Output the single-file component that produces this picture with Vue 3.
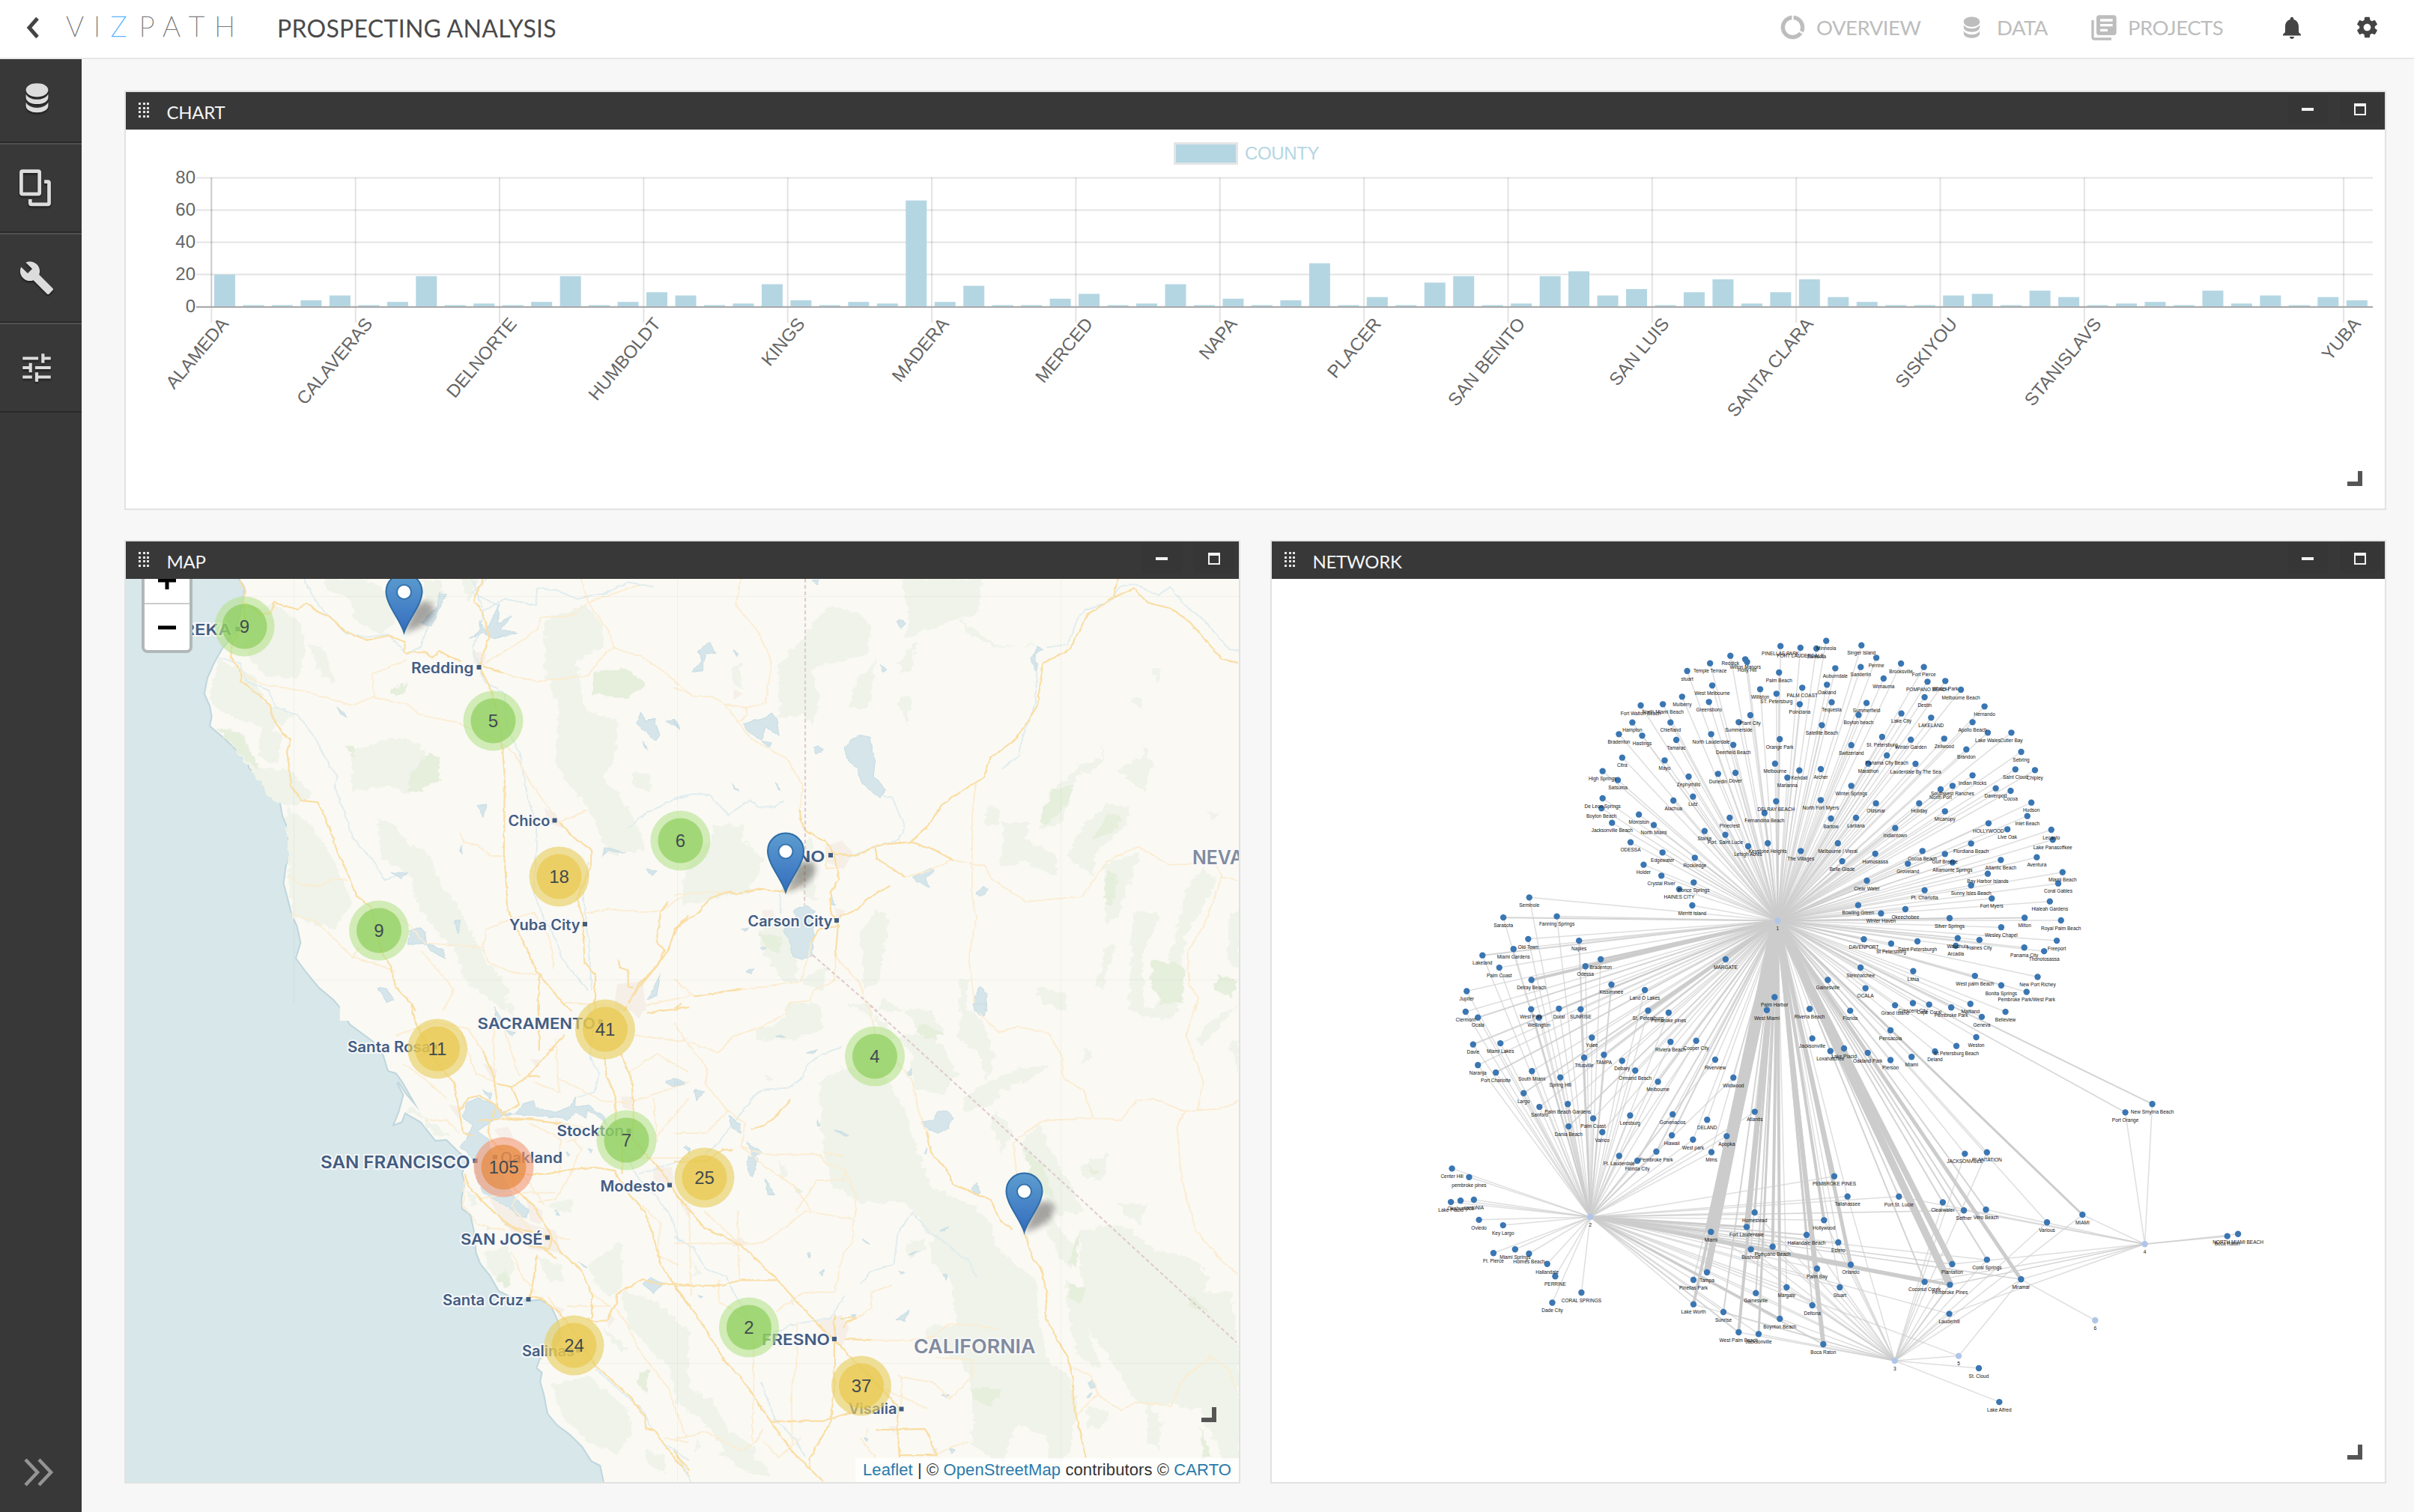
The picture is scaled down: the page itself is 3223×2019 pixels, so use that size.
<script setup>
const navItems = [
  { label: 'OVERVIEW', icon: 'usage', cls: 'nav-overview' },
  { label: 'DATA', icon: 'database', cls: 'nav-data' },
  { label: 'PROJECTS', icon: 'library', cls: 'nav-projects' },
]

const icons = {
  usage: 'M13 2.05v3.03c3.39.49 6 3.39 6 6.92 0 .9-.18 1.75-.48 2.54l2.6 1.53c.56-1.24.88-2.62.88-4.07 0-5.18-3.95-9.45-9-9.95zM12 19c-3.87 0-7-3.13-7-7 0-3.53 2.61-6.43 6-6.92V2.05c-5.06.5-9 4.76-9 9.95 0 5.52 4.47 10 9.99 10 3.31 0 6.24-1.61 8.06-4.09l-2.6-1.53C16.17 17.98 14.21 19 12 19z',
  database: 'M12 1.2c-4.6 0-8.3 1.9-8.3 5s3.700 5.300 8.300 5.300 8.300-2.200 8.300-5.300-3.700-5-8.300-5zM3.700 9.300v2.500c0 2.900 3.700 5 8.300 5s8.300-2.100 8.300-5V9.300c-1.300 2.500-4.600 4-8.300 4s-7-1.500-8.300-4zM3.700 15.500v2.600c0 2.900 3.700 4.900 8.300 4.900s8.300-2 8.300-4.900v-2.600c-1.300 2.500-4.600 4-8.300 4s-7-1.500-8.300-4z',
  library: 'M4 6H2v14c0 1.100.9 2 2 2h14v-2H4V6zm16-4H8c-1.100 0-2 .9-2 2v12c0 1.100.9 2 2 2h12c1.100 0 2-.9 2-2V4c0-1.100-.9-2-2-2zm-1 9H9V9h10v2zm-4 4H9v-2h6v2zm4-8H9V5h10v2z',
  bell: 'M12 22c1.100 0 2-.9 2-2h-4c0 1.100.89 2 2 2zm6-6v-5c0-3.070-1.640-5.640-4.500-6.320V4c0-.83-.67-1.500-1.500-1.500s-1.500.67-1.500 1.500v.68C7.630 5.360 6 7.920 6 11v5l-2 2v1h16v-1l-2-2z',
  gear: 'M19.430 12.980c.04-.32.07-.64.07-.98s-.03-.66-.07-.98l2.110-1.650c.19-.15.24-.42.12-.64l-2-3.460c-.12-.22-.39-.3-.61-.22l-2.490 1c-.52-.4-1.080-.73-1.690-.98l-.38-2.650C14.460 2.180 14.250 2 14 2h-4c-.25 0-.46.18-.49.42l-.38 2.650c-.61.25-1.170.59-1.690.98l-2.490-1c-.23-.09-.49 0-.61.22l-2 3.460c-.13.22-.07.49.12.64l2.110 1.650c-.04.32-.07.65-.07.98s.03.66.07.98l-2.110 1.650c-.19.15-.24.42-.12.64l2 3.460c.12.22.39.3.61.22l2.490-1c.52.4 1.080.73 1.690.98l.38 2.650c.03.24.24.42.49.42h4c.25 0 .46-.18.49-.42l.38-2.650c.61-.25 1.170-.59 1.690-.98l2.490 1c.23.09.49 0 .61-.22l2-3.460c.12-.22.07-.49-.12-.64l-2.110-1.650zM12 15.500c-1.930 0-3.500-1.570-3.500-3.500s1.570-3.500 3.500-3.500 3.500 1.570 3.500 3.500-1.570 3.500-3.500 3.500z',
  copy: 'M3.500 1h9.500c1 0 1.700.7 1.700 1.700v12.300c0 1-.7 1.700-1.700 1.700H3.500c-1 0-1.700-.7-1.700-1.700V2.700C1.800 1.700 2.500 1 3.500 1zm.4 2.100v11.500h8.700V3.100zM16.500 7.200h2.200c1 0 1.700.7 1.700 1.700v12.200c0 1-.7 1.700-1.700 1.700H8.800c-1 0-1.700-.7-1.700-1.700v-2.400h2.100v2h9.100V9.300h-1.800z',
  wrench: 'M22.700 19l-9.100-9.100c.9-2.300.4-5-1.500-6.900-2-2-5-2.400-7.400-1.300L9 6 6 9 1.600 4.700C.4 7.100.9 10.100 2.900 12.100c1.900 1.900 4.600 2.400 6.900 1.500l9.100 9.100c.4.4 1 .4 1.400 0l2.300-2.300c.5-.4.5-1.100.1-1.400z',
  tune: 'M3 17v2h6v-2H3zM3 5v2h10V5H3zm10 16v-2h8v-2h-8v-2h-2v6h2zM7 9v2H3v2h4v2h2V9H7zm14 4v-2H11v2h10zm-6-4h2V7h4V5h-4V3h-2v6z',
}
const sideItems = [
  { icon: 'database', size: 43 },
  { icon: 'copy', size: 54 },
  { icon: 'wrench', size: 48 },
  { icon: 'tune', size: 50 },
]

/* ---- Bar chart ---- */
const counts = [20, 1, 1, 4, 7, 1, 3, 19, 1, 2, 1, 3, 19, 1, 3, 9, 7, 1, 2, 14, 4, 1, 3, 2, 66, 3, 13, 1, 1, 5, 8, 1, 2, 14, 1, 5, 1,
  4, 27, 1, 6, 1, 15, 19, 1, 2, 19, 22, 7, 11, 1, 9, 17, 2, 9, 17, 6, 3, 1, 1, 7, 8, 1, 10, 6, 1, 2, 3, 1, 10, 2, 7, 1, 6, 4]
const X0 = 282.3
const STEP = 38.47
const Y0 = 409.6
const UNIT = 2.15
const bars = counts.map((v, i) => ({ x: X0 + i * STEP + 3.700, y: Y0 - v * UNIT, h: v * UNIT }))
const yTicks = [80, 60, 40, 20, 0].map((v) => ({ v, y: Y0 - v * UNIT }))
const xTicks = [[0, 'ALAMEDA'], [5, 'CALAVERAS'], [10, 'DELNORTE'], [15, 'HUMBOLDT'], [20, 'KINGS'], [25, 'MADERA'], [30, 'MERCED'], [35, 'NAPA'],
  [40, 'PLACER'], [45, 'SAN BENITO'], [50, 'SAN LUIS'], [55, 'SANTA CLARA'], [60, 'SISKIYOU'], [65, 'STANISLAVS'], [74, 'YUBA']]
  .map(([i, label]) => ({ label, x: X0 + i * STEP }))

/* ---- Network graph ---- */
const place = (ox, oy, sx, sy, rows) =>
  rows.map(([x, y, label, ...w]) => ({ x: ox + x * sx, y: oy + y * sy, label, w: w.length ? w : [1] }))

const hubs = [
  { x: 2373.3, y: 1229.5, label: '1' },
  { x: 2123.2, y: 1625, label: '2' },
  { x: 2529.7, y: 1817, label: '3' },
  { x: 2863.6, y: 1661.3, label: '4' },
  { x: 2615.1, y: 1810.6, label: '5' },
  { x: 2797.3, y: 1763, label: '6' },
]
const nodes = [
  ...place(2050, 820, 0.4847, 0.33333, [
    [675, 128, 'PINELLAS PARK'], [730, 135, 'FORT LAUDERDALE'], [774, 138, 'Sarasota'], [801, 107, 'Minneola'], [898, 125, 'Singer Island'],
    [537, 167, 'Reddick'], [578, 181, 'Wilton Manors'], [583, 192, 'Holly Hill'], [481, 197, 'Temple Terrace'], [418, 228, 'stuart'],
    [671, 234, 'Palm Beach'], [826, 217, 'Auburndale'], [896, 212, 'Sanderlin'], [939, 175, 'Perrine'], [1007, 198, 'Brooksville'],
    [1070, 212, 'Fort Pierce'], [1080, 271, 'POMPANO BEACH'], [1129, 268, 'Winter Park'], [1172, 303, 'Melbourne Beach'], [959, 258, 'Wimauma'],
    [487, 286, 'West Melbourne'], [619, 301, 'Williston'], [664, 319, 'ST. Petersburg'], [735, 295, 'PALM COAST'], [803, 283, 'Oakland'],
    [404, 331, 'Mulberry'], [478, 352, 'Greensboro'], [728, 361, 'Poinciana'], [816, 353, 'Tequesta'], [912, 356, 'Summerfield'],
    [1072, 333, 'Destin'], [1237, 370, 'Hernando'], [290, 366, 'Fort Walton Beach'], [351, 361, 'North Miami Beach'], [592, 405, 'Plant City'],
    [560, 433, 'Summerside'], [890, 404, 'Boyton beach'], [1008, 398, 'Lake City'], [1090, 415, 'LAKELAND'], [1204, 433, 'Apollo Beach'],
    [267, 434, 'Hampton'], [372, 434, 'Chiefland'], [789, 445, 'Satellite Beach'], [230, 481, 'Bradenton'], [294, 487, 'Hastings'],
    [388, 504, 'Tamarac'], [484, 481, 'North Lauderdale'], [673, 501, 'Orange Park'], [1246, 475, 'Lake Wales'], [1311, 475, 'Cutler Bay'],
    [545, 524, 'Deerfield Beach'], [870, 525, 'Switzerland'], [955, 492, 'St. Petersburg'], [1034, 503, 'Winter Garden'], [1126, 499, 'Zellwood'],
    [1187, 542, 'Brandon'], [1338, 552, 'Sebring'], [239, 575, 'Citra'], [356, 586, 'Mayo'], [660, 599, 'Melbourne'], [968, 566, 'Panama City Beach'],
    [917, 599, 'Marathon'], [1047, 600, 'Lauderdale By The Sea'], [185, 629, 'High Springs'], [227, 665, 'Satsuma'], [422, 651, 'Zephyrhills'],
    [503, 640, 'Dunedin'], [551, 636, 'Dover'], [694, 655, 'Marianna'], [727, 626, 'Kendall'], [786, 621, 'Archer'], [1322, 622, 'Saint Cloud'],
    [1376, 625, 'Chipley'], [1204, 646, 'Indian Rocks'], [870, 688, 'Winter Springs'], [1116, 702, 'North Port'], [1149, 688, 'Southwest Ranches'],
    [1268, 698, 'Davenport'], [1309, 708, 'Cocoa'], [185, 738, 'De Leon Springs'], [182, 778, 'Boyton Beach'], [380, 747, 'Alachua'],
    [434, 731, 'Lutz'], [663, 750, 'DELRAY BEACH'], [786, 745, 'North Fort Myers'], [938, 758, 'Oldsmar'], [1057, 758, 'Holiday'],
    [1366, 755, 'Hudson'], [285, 803, 'Morriston'], [631, 797, 'Fernandina Beach'], [1128, 790, 'Micanopy'], [1355, 809, 'Inlet Beach'],
    [211, 836, 'Jacksonville Beach'], [326, 845, 'North Miami'], [535, 816, 'Pinecrest'], [814, 819, 'Bartow'], [883, 816, 'Lantana'],
    [1248, 838, 'HOLLYWOOD'], [466, 869, 'Starke'], [523, 884, 'Port. Saint Lucie'], [991, 857, 'Indiantown'], [1300, 862, 'Live Oak'],
    [1421, 864, 'Lecanto'], [1425, 904, 'Lake Panasoffkee'], [262, 914, 'ODESSA'], [586, 930, 'Lehigh Acres'], [640, 918, 'Keystone Heights'],
    [833, 918, 'Melbourne / Vieral'], [1200, 919, 'Flordiana Beach'], [350, 955, 'Edgewater'], [731, 949, 'The Villages'], [1066, 949, 'Cocoa Beach'],
    [936, 960, 'Homosassa'], [1128, 961, 'Gulf Breeze'], [1149, 995, 'Altamonte Springs'], [439, 976, 'Rockledge'], [845, 990, 'Belle Glade'],
    [1026, 1000, 'Groveland'], [1282, 985, 'Atlantic Beach'], [1381, 974, 'Aventura'], [298, 1004, 'Holder'], [347, 1048, 'Crystal River'],
    [1246, 1040, 'Bay Harbor Islands'], [1452, 1034, 'Miami Beach'], [436, 1075, 'Ponce Springs'], [396, 1102, 'HAINES CITY'], [913, 1068, 'Clear Water'],
    [1440, 1079, 'Coral Gables'], [1200, 1087, 'Sunny Isles Beach'], [1072, 1106, 'Pt. Charlotta'], [1257, 1139, 'Fort Myers'], [1417, 1151, 'Hialeah Gardens'],
    [432, 1167, 'Merritt Island'], [889, 1166, 'Bowling Green'], [952, 1199, 'Winter Haven'], [1019, 1182, 'Okeechobee'],
  ]),
  ...place(1900, 1180, 0.35714, 0.38265, [
    [397, 48, 'Seminole', 1, 1], [300, 118, 'Sarasota', 2, 1], [500, 114, 'Fanning Springs', 1, 1], [393, 193, 'Old Town', 1, 1], [583, 199, 'Naples', 1, 2],
    [338, 228, 'Miami Gardens', 1, 1], [222, 250, 'Lakeland', 2, 1], [285, 293, 'Palm Coast', 1, 1], [664, 264, 'Bradenton', 3, 1], [607, 288, 'Odessa', 4, 1],
    [405, 336, 'Delray Beach', 4, 1], [163, 375, 'Jupiter', 1, 1], [704, 352, 'Kissimmee', 1, 2], [829, 371, 'Land O Lakes', 1, 1], [159, 447, 'Clermont', 1, 1],
    [205, 467, 'Ocala', 2, 1], [404, 438, 'West Park', 1, 2], [433, 467, 'Wellington', 2, 1], [508, 436, 'Doral', 1, 1], [589, 438, 'SUNRISE', 1, 2],
    [841, 443, 'St. Petersburg', 5, 1], [918, 450, 'Pembroke pines', 1, 1], [1131, 264, 'MARGATE', 1], [631, 537, 'Yulee', 1, 1], [187, 561, 'Davie', 2, 1],
    [289, 557, 'Miami Lakes', 1, 1], [925, 552, 'Riviera Beach', 1, 1], [1021, 548, 'Cooper City', 1, 1], [602, 607, 'Titusville', 2, 1], [676, 597, 'TAMPA', 2, 1],
    [744, 618, 'Debary', 1, 1], [793, 652, 'Ormand Beach', 1, 1], [1092, 614, 'Riverview', 1, 1], [205, 633, 'Naranja', 1, 1], [272, 659, 'Port Charlotte', 2, 1],
    [407, 654, 'South Miami', 1, 1], [513, 676, 'Spring Hill', 1, 1], [878, 691, 'Melbourne', 2, 1], [1160, 677, 'Wildwood', 1, 1], [376, 731, 'Largo', 2, 1],
    [435, 779, 'Sanford', 1, 1], [541, 769, 'Palm Beach Gardens', 1, 1], [636, 819, 'Palm Coast', 1, 1], [544, 847, 'Dania Beach', 2, 1], [670, 867, 'Valrico', 1, 1],
    [774, 809, 'Leesburg', 1, 1], [933, 805, 'Gonenacios', 1, 1], [1062, 824, 'DELAND', 1], [1240, 796, 'Atlantis', 1, 1], [930, 878, 'Hiawaii', 2, 1],
    [1009, 893, 'West park', 1, 1], [1135, 881, 'Apopka', 1, 1], [872, 935, 'Pembroke Park', 2, 1], [733, 950, 'Ft. Lauderdale', 1, 1], [801, 967, 'Florida City', 2, 1],
    [1078, 937, 'Mims', 1, 1], [1314, 396, 'Palm Harbor', 1], [1285, 441, 'West Miami', 2], [1445, 437, 'Riveria Beach', 1], [1455, 540, 'Jacksonville', 1],
    [108, 994, 'Center Hill', 0, 1], [172, 1024, 'pembroke pines', 0, 1], [104, 1111, 'Lake Placid', 0, 1], [140, 1106, 'Okahumpca', 0, 1], [190, 1103, 'cantoNIA', 0, 1],
    [209, 1173, 'Oviedo', 0, 1], [299, 1192, 'Key Largo', 0, 1], [263, 1289, 'Ft. Pierce', 0, 1], [344, 1276, 'Miami Springs', 0, 1], [396, 1291, 'Holmes Beach', 0, 1],
    [464, 1327, 'Hallandale', 0, 1], [494, 1370, 'PERRINE', 0, 1], [592, 1427, 'CORAL SPRINGS', 0, 1], [483, 1462, 'Dade City', 0, 1],
  ]),
  ...place(2400, 1180, 0.43367, 0.48469, [
    [468, 95, 'Silver Springs', 2], [699, 94, 'Milton', 2], [811, 101, 'Royal Palm Beach'], [627, 120, 'Wesley Chapel'], [798, 157, 'Freeport'],
    [204, 153, 'DAVENPORT', 2], [288, 165, 'St Petersburg'], [369, 159, 'Saint Petersburgh'], [493, 150, 'Wauchula'], [487, 171, 'Arcadia'], [560, 155, 'Haines City'],
    [698, 176, 'Panama City'], [759, 186, 'Thonotosassa'], [194, 231, 'Steinhatchee'], [356, 241, 'Lithia'], [546, 254, 'West palm Beach'], [739, 257, 'New Port Richey'],
    [627, 280, 'Bonita Springs'], [705, 298, 'Pembroke Park/West Park'], [93, 265, 'Gainesville'], [209, 288, 'OCALA'], [300, 335, 'Grand Island'],
    [355, 329, 'Crescent City'], [405, 333, 'Cape Coral'], [473, 341, 'Pembroke Park'], [532, 331, 'Maitland'], [567, 367, 'Geneva'], [640, 353, 'Belleview'],
    [162, 350, 'Florida'], [286, 404, 'Pensacola'], [550, 423, 'Weston'], [489, 447, 'St Petersburg Beach'], [423, 462, 'Deland'], [351, 477, 'Miami'],
    [286, 486, 'Pierson'], [216, 466, 'Oakland Park'], [143, 454, 'Lake Placid', 3], [101, 461, 'Loxahatchee'],
    [1009, 630, 'Port Orange', 1.600, 0, 0, 1], [1092, 607, 'New Smyrna Beach', 2, 0, 0, 1], [515, 744, 'JACKSONVILLE', 1, 0, 1], [583, 740, 'PLANTATION', 1, 0, 1],
    [312, 862, 'Port St. Lucie', 2, 1, 0, 1], [447, 878, 'Clearwater', 2, 0, 1], [512, 900, 'Seffner', 2, 1.500, 0, 1], [580, 898, 'Vero Beach', 2, 0, 0, 1],
    [768, 933, 'Various', 1, 0, 1], [877, 912, 'MIAMI', 3, 0, 1, 1], [1323, 971, 'Boca Raton', 0, 0, 0, 1.500], [1356, 965, 'NORTH MIAMI BEACH', 0, 0, 0, 1],
    [583, 1036, 'Coral Springs', 2, 1, 1], [476, 1048, 'Plantation', 8, 1.500, 1, 1], [469, 1105, 'Pembroke Pines', 10, 4, 2, 1.500], [688, 1090, 'Miramar', 5, 1.500, 1, 1, 1, 1],
    [467, 1185, 'Lauderhill', 0, 1, 1, 1], [558, 1335, 'St. Cloud', 0, 0, 1], [621, 1428, 'Lake Alfred', 0, 0, 1],
  ]),
  ...place(2180, 1520, 0.33333, 0.33333, [
    [807, 152, 'PEMBROKE PINES', 4, 1], [860, 233, 'Tallahassee', 1, 1, 1], [488, 297, 'Homestead', 3, 1, 1], [456, 355, 'Fort Lauderdale', 7, 3, 1],
    [766, 328, 'Hollywood', 4, 1, 1], [696, 387, 'Hallandale Beach', 3, 2, 1], [313, 375, 'Miami', 16, 3, 1], [473, 445, 'Bushnell', 1, 1, 1],
    [560, 434, 'Pompano Beach', 4, 2, 1], [823, 417, 'Estero', 1, 1, 1], [738, 522, 'Palm Bay', 3, 1, 1], [873, 506, 'Orlando', 5, 4, 1],
    [297, 537, 'Tampa', 9, 1, 1], [243, 567, 'Pinellas Park', 1, 1], [616, 597, 'Margate', 1, 1, 1], [829, 597, 'Stuart', 1, 1, 1],
    [493, 620, 'Gainesville', 2, 1, 1], [243, 665, 'Lake Worth', 4, 1, 1], [719, 669, 'Deltona', 2, 1, 1], [363, 696, 'Sunrise', 2, 1, 1],
    [589, 723, 'Boynton Beach', 4, 3, 1], [424, 777, 'West Palm Beach', 4, 2, 1], [504, 784, 'Jacksonville', 3, 1, 1], [763, 825, 'Boca Raton', 6, 2, 1],
    [1169, 575, 'Coconut Creek', 2, 3, 1, 1],
  ]),
]
const links = nodes.flatMap((n) => n.w.map((w, i) => ({ n, w, h: hubs[i] })).filter((l) => l.w))
links.push({ n: hubs[4], w: 1, h: hubs[2] }, { n: hubs[4], w: 1, h: hubs[1] })

/* ---- Map: coastline in two stretches, then four base tiles, each drawn in its own local grid ---- */
const coasts = [
  {
    t: 'translate(160 710) scale(.4847 .4082)',
    d: 'M328 150L345 180 343 215 335 260 320 330 283 385 262 430 243 480 235 530 250 570 255 605 250 635 290 675 320 710 350 740 358 772 385 800 405 840 425 870 443 885 450 930 465 970 467 1020 475 1050 460 1090 453 1150 462 1190 475 1250 490 1290 500 1345 487 1395 515 1440 550 1490 590 1530 606 1552',
    rest: 'L606 1600 3300 1600 3300 100Z',
  },
  {
    t: 'translate(160 1340) scale(.4847 .4209)',
    d: 'M603 3L635 65 700 120 728 165 740 212 762 220 780 248 825 340 785 285 765 250 783 290 770 345 757 382 775 375 785 345 830 375 870 433 900 430 935 470 957 490 945 540 952 570 943 620 945 650 968 670 978 725 983 790 995 825 1020 860 1045 910 1080 930 1130 940 1160 937 1190 960 1210 1010 1215 1060 1195 1100 1160 1125 1150 1155 1165 1170 1160 1200 1170 1240 1180 1300 1205 1335 1240 1365 1275 1405 1300 1450 1325 1465 1342 1560',
    rest: 'L3300 1600 3300 -20 603 -20Z',
  },
]
const tiles = [
  {
    id: 'nw', t: 'translate(160 710) scale(.4847 .4082)',
    forest: [
      'M565 154L680 154 745 200 760 300 720 335 650 290 630 210 575 195Z',
      'M345 260L430 240 500 300 510 400 495 480 400 470 350 400Z', 'M270 420L370 470 400 560 480 600 420 650 300 600 250 560Z',
      'M270 640L340 660 380 770 470 780 530 860 480 900 420 880 350 760Z', 'M390 640L450 660 430 760 380 740Z',
      'M460 900L530 960 590 1080 640 1220 590 1300 480 1260 465 1140Z', 'M640 720L750 670 820 690 850 740 800 860 730 830 640 850Z',
      'M710 940L760 960 800 1030 850 1050 880 1150 930 1220 980 1340 1010 1400 1070 1500 1060 1568 960 1480 920 1370 830 1240 800 1120 720 1070Z',
      'M1170 290L1280 240 1330 300 1330 380 1260 420 1280 580 1370 620 1360 760 1330 800 1400 900 1450 1040 1350 1060 1290 900 1240 830 1200 760 1210 580 1170 450Z',
      'M1410 790L1460 790 1460 850 1420 830Z', 'M520 370L560 380 590 490 560 480Z', 'M940 154L990 154 960 230Z', 'M830 160L880 160 900 220 840 240Z',
    ],
    park: ['M1300 460L1390 445 1450 500 1400 545 1300 530Z', 'M850 725L885 740 880 810 830 850 795 850 800 790Z', 'M262 645L335 660 388 785 365 765 305 690Z', 'M755 510L790 495 780 530 752 532Z', 'M618 695L650 705 645 740Z'],
    urban: ['M1170 905L1200 920 1220 970 1175 950Z', 'M1370 1480L1440 1470 1450 1568 1360 1568Z', 'M970 390L1010 400 1000 440 975 430Z'],
    lake: [
      'M800 1305Q820 1285 840 1310L845 1345 890 1370 897 1397 860 1375 845 1350 793 1350Z', 'M1423 630L1435 590 1450 620 1472 610 1487 665 1475 685 1450 655Z',
      'M1503 620L1530 616 1543 645Z', 'M1440 685L1455 716 1445 705Z', 'M965 350L995 320 990 290 1010 325 1045 235 1040 300 1080 275 1050 320 1095 330 1030 350 1000 330Z',
      'M880 200L900 205 875 260 860 310 830 300 875 240Z', 'M985 895L1010 892 1000 935Z', 'M1330 1060L1335 1030 1390 1050 1345 1045Z', 'M1450 1105L1480 1110 1465 1125Z',
      'M1455 1530L1475 1480 1490 1445 1478 1520Z', 'M920 1275L938 1270 932 1315Z', 'M598 573L628 606 610 600Z', 'M940 1025L943 1055 936 1045Z', 'M710 1490L735 1495 755 1530 735 1540Z', 'M745 1115L790 1115 775 1135Z',
    ],
    river: [
      'M508 154C540 240 560 260 590 290L620 330 680 345 740 335 790 400 830 375 850 300', 'M270 410L330 430 350 490 410 520 430 575 490 600 540 680 575 760 600 800 590 830 620 920 640 1000 700 1080 730 1140 780 1120',
      'M970 154L985 200 1000 260 990 330 970 380 1005 490 1060 530 1065 640 1100 720 1125 880 1150 960 1140 1180 1170 1270 1200 1330 1220 1400 1290 1500',
      'M1568 865C1520 870 1500 895 1450 920L1400 970', 'M1000 260L1060 220 1145 240 1150 185 1200 190 1260 220 1340 200 1400 165 1468 180', 'M1290 1080L1275 1180 1290 1320 1300 1500', 'M1010 154L970 200 1040 240',
    ],
    road: [
      'M330 160L345 190 340 230 390 270 415 268 425 232 490 255 515 232 545 262 580 280 620 325 680 355 740 340 785 360 785 395 840 395 860 412 880 392 940 425',
      'M340 230L345 300 310 360 305 410 330 450 335 490 380 530 415 570 420 610 450 660 470 680 460 720 468 780 470 830 500 880 545 885 575 960 600 1050 625 1110 650 1190 690 1225 720 1370 745 1420 760 1490 800 1540 815 1568',
      'M1000 154L975 220 1000 270 1018 340 990 440 1020 510 1050 650 1060 800 1058 1050 1070 1240 1150 1440 1225 1550 1245 1568', 'M1210 950L1250 1000 1298 1040 1298 1090 1260 1200 1275 1260 1280 1410 1308 1450 1308 1568',
      'M1000 440L1060 465', 'M1510 1210L1490 1245 1478 1340 1500 1370 1480 1420 1430 1480 1390 1568', 'M1568 1255L1530 1300 1510 1370 1480 1420 1410 1520', 'M1155 1450L1152 1568', 'M1372 1400L1378 1425 1400 1435 1400 1490 1415 1495',
    ],
    minor: [
      'M790 420L695 465 700 540 640 568 600 555 520 525 500 520 395 500 335 465', 'M700 540L790 565 830 600 930 625 1050 690', 'M1060 465L1150 490 1290 470 1330 405 1360 380 1350 330 1290 230 1270 154',
      'M1360 380L1440 410 1500 460 1568 530', 'M990 440L1090 370 1150 320 1160 280 1250 275 1290 230 1430 175', 'M1050 690L1090 730 1130 820 1210 950', 'M940 985L945 1015 985 1025 1020 1060 1058 1062',
      'M470 1250L540 1275 590 1330 640 1390 720 1420 760 1440', 'M462 1125L500 1155 550 1160 590 1135 625 1140', 'M720 1225L800 1290 840 1345 1000 1360 1010 1300 1070 1270 1140 1245 1185 1330 1195 1430',
      'M640 1390L700 1310 730 1340', 'M1000 1360L1015 1410 1080 1440 1155 1450', 'M1210 950L1290 910', 'M1275 1250L1340 1235 1450 1245 1490 1240 1568 1180', 'M830 1370L880 1440 920 1500 890 1568', 'M1225 1540L1420 1555 1568 1520',
    ],
    dash: [],
  },
  {
    id: 'ne', t: 'translate(900 710) scale(.4974 .4082)',
    forest: [
      'M608 154L825 154 815 270 770 280 620 350 630 270Z', 'M380 290L420 245 500 265 530 310 520 400 460 420 370 450 390 560 370 630 350 600 285 605 280 440 330 370Z',
      'M545 410L520 580 468 570 490 490Z', 'M650 360L600 430 610 460 635 455Z', 'M600 540L638 540 625 635Z', 'M1090 765L1150 740 1155 680 1140 770 1080 800 1040 960 980 970 1010 850 1060 800Z',
      'M1190 780L1250 745 1265 700 1285 760 1265 855Z', 'M1160 890L1220 900 1215 960 1130 1050 1130 1125 1060 1070 1080 990Z', 'M880 950L958 950 940 1000 1025 1060 1025 1128 940 1080 880 1100Z',
      'M840 900L875 900 872 960 838 960Z', 'M545 1235L575 1270 550 1470 510 1500 500 1310Z', 'M1240 1240L1305 1250 1260 1380 1260 1568 1220 1568 1230 1320Z', 'M1420 1100L1460 1140 1370 1330 1350 1568 1290 1568 1350 1300 1370 1180Z',
      'M1490 1250L1516 1240 1516 1440 1485 1400Z', 'M110 960L190 960 200 920 180 1000 240 1070 200 1180 20 1220 30 1100 90 1020Z', 'M240 1240L320 1300 330 1480 280 1460 230 1350Z', 'M340 1460L410 1420 400 1500 350 1480Z',
      'M1150 1500L1185 1350 1160 1360 1130 1480Z', 'M970 1490L1060 1510 1050 1568 985 1540Z', 'M1280 450L1302 450 1295 495Z', 'M1225 560L1245 540 1258 580Z', 'M1155 1090L1250 1050 1190 1260 1160 1280Z', 'M1430 920L1460 920 1450 945Z', 'M155 450L175 430 185 510 165 510Z',
      'M560 1530L620 1568 540 1568Z', 'M770 1460L790 1470 785 1568 765 1540Z', 'M320 1030L370 1000 380 1210 340 1180Z', 'M760 275L800 340 870 380 960 368 980 375 870 372 820 335Z',
    ],
    park: ['M1020 840L1070 830 1060 880 1000 960 980 950Z', 'M1160 930L1200 920 1190 970 1120 1010Z', 'M1280 1400L1370 1420 1370 1540 1310 1550 1280 1480Z', 'M1160 1110L1190 1120 1180 1220 1155 1220Z', 'M1460 1450L1510 1470 1500 1520 1450 1500Z', 'M230 1310L290 1330 280 1380 240 1350Z'],
    urban: ['M405 1030L450 1010 480 1050 455 1105 410 1080Z', 'M160 515L185 530 160 550Z', 'M235 1240L265 1235 270 1265 240 1260Z', 'M430 1230L460 1240 440 1280Z'],
    lake: [
      'M457 708L475 680 500 665 525 672 532 720 540 750 535 800 568 845 553 873 505 825 490 775 465 745Z', 'M186 628L235 612 262 594 277 615 281 667 245 640 235 682 200 655Z',
      'M320 1240L355 1222 378 1240 370 1255 375 1320 370 1385 345 1400 320 1390 308 1330 293 1310 300 1290 330 1270Z', 'M375 705L390 700 400 715 380 728Z', 'M65 390L95 360 110 395 85 400 75 455 48 460 75 420Z',
      'M158 385L175 400 168 408Z', 'M598 295L610 288 622 300 610 316Z', 'M370 160L388 155 385 175Z', 'M958 415L975 375 992 385 970 400 973 455 960 430Z', 'M640 1130L690 1100 700 1110 675 1135 685 1165 650 1140Z',
      'M810 1185L830 1160 843 1170 825 1195Z', 'M805 1530L820 1488 840 1510 838 1568 806 1568Z', 'M420 1190L435 1225 420 1220Z', 'M155 825L175 850 160 840Z', 'M272 820L286 845 278 840Z', 'M553 435L570 450 560 460Z', 'M192 1440L215 1430 208 1445Z', 'M230 1360L247 1360 238 1370Z', 'M180 1300L200 1297 190 1305Z', 'M235 685L262 690 255 708Z', 'M0 620L15 640 5 635Z',
    ],
    river: ['M0 870L50 858 95 860 145 925 205 878 225 900 270 900 295 880', 'M560 865L585 868 620 970 600 1010 530 1035 470 1065', 'M1000 378L1055 370 1085 280 1105 255 1175 225 1195 180 1235 170 1300 210 1330 180 1380 250 1420 285 1490 385 1516 390', 'M975 430L970 560 930 690 925 735 880 775', 'M320 1140L285 1180 285 1250'],
    road: [
      'M1190 154L1180 215 1110 270 1062 385 990 430 975 570 920 675 850 740 830 805 720 890 680 965 635 1015 545 1025 490 1060 430 1055 408 1012 360 985 340 950 338 910', 'M1180 215L1235 185 1270 232 1330 250 1380 290 1470 415 1516 430',
      'M635 1015L690 1035 750 1075', 'M0 1320L10 1290 65 1245 95 1200 145 1178 170 1185 230 1170 300 1178', 'M430 1060L443 1140 420 1180 420 1240 440 1290 433 1390', 'M443 1260L495 1235 520 1200 580 1158', 'M540 1035L545 1070 620 1130', 'M55 1520L180 1495', 'M440 1290L390 1300 370 1340',
    ],
    minor: [
      'M180 154L165 240 225 325 262 430 245 560 195 575 135 565 105 540 60 540 0 510', 'M135 565L210 680 300 740 345 830 338 910', 'M195 575L195 600 175 620', 'M810 820L800 930 800 1200 812 1270 790 1390 810 1568', 'M750 1075L835 1092 850 1135 945 1210 1095 1193 1160 1080 1245 1030 1330 1090 1450 1080 1470 1130 1516 1140',
      'M1470 1130L1425 1280 1378 1380 1382 1480 1408 1525 1400 1568', 'M0 1465L55 1520 340 1470 360 1390 370 1340', 'M433 1390L430 1470 375 1500 365 1535 310 1540 300 1568', 'M433 1390L500 1480 520 1568', 'M0 1190L80 1180 145 1178', 'M620 1130L680 1110 745 1072', 'M405 1050H445V1100H408V1040', 'M355 1090L340 1150 300 1178',
    ],
    dash: ['M352 154V960L350 1222M372 1385L545 1568'],
  },
  {
    id: 'sw', t: 'translate(160 1340) scale(.4847 .4209)',
    forest: [
      'M1000 790L1070 770 1090 840 1060 900 1020 850Z', 'M1150 800L1210 830 1225 880 1180 880Z', 'M1290 830L1380 760 1385 900 1350 930 1310 890Z', 'M1380 910L1470 940 1568 1040 1568 1200 1480 1120 1400 1020Z',
      'M1190 1210L1290 1180 1400 1290 1410 1360 1370 1430 1290 1390 1220 1310Z', 'M1450 1420L1500 1430 1500 1490 1450 1460Z', 'M790 345L830 360 870 420 910 420 860 380 800 325Z', 'M1180 640L1250 620 1240 670Z', 'M955 595L980 610 985 640 965 640Z', 'M1330 1030L1400 1090 1380 1110Z', 'M1040 0L1080 0 1090 40Z',
      'M1510 1150L1568 1180 1568 1300Z',
    ],
    park: ['M1035 870L1065 845 1082 890 1060 900Z', 'M1430 1170L1460 1165 1450 1230 1425 1220Z', 'M1010 700L1025 715 1012 720Z'],
    urban: ['M1010 600L1060 640 1130 700 1200 720 1215 790 1130 780 1050 690Z', 'M1120 620L1165 660 1160 700 1130 690Z', 'M1030 400L1070 390 1090 440 1050 430Z', 'M1380 295L1410 295 1415 340 1385 330Z', 'M1470 520L1520 520 1530 590 1470 560Z', 'M1390 0L1450 0 1430 50Z', 'M1345 980L1365 1000 1345 1030Z', 'M1000 190L1040 210 1030 250Z', 'M830 140L870 145 890 180 830 170Z', 'M1200 960L1225 970 1210 1000Z', 'M1130 175L1160 180 1150 205Z', 'M905 320L940 330 935 370Z', 'M1550 630L1568 640 1568 680Z'],
    lake: [
      'M955 315L985 300 1030 320 1055 345 1090 352 1110 318 1140 308 1145 330 1200 345 1240 328 1255 297 1253 330 1290 322 1335 360 1340 385 1305 345 1285 340 1285 365 1255 345 1230 372 1215 362 1100 352 1060 352 1010 385 985 405 1015 430 1025 480 1060 560 1090 620 1125 655 1120 680 1098 675 1080 655 1060 640 1000 600 985 560 975 500 955 470 935 455 955 430 970 385 945 360Z',
      'M1440 890L1460 868 1495 890 1470 918Z', 'M1505 250L1530 235 1558 255 1520 262Z', 'M1030 10L1050 50 1040 60Z', 'M1265 820L1290 840 1278 835Z', 'M1200 655L1212 672 1203 672Z', 'M1000 275L1025 285 1020 305Z', 'M1290 460L1302 465 1295 475Z', 'M1230 470L1240 480 1232 485Z', 'M1060 85L1090 92 1080 102Z', 'M1555 455L1568 460 1568 475Z',
    ],
    river: ['M1290 0L1305 70 1295 170 1320 220 1310 280 1255 297', 'M1340 380L1400 490 1430 560 1470 600 1520 680 1540 755 1568 765', 'M1310 1160L1380 1230 1440 1290 1465 1350', 'M1505 1400L1568 1450', 'M1430 540L1568 490'],
    road: [
      'M805 0L810 50 880 200 920 250 935 340 945 410 975 420', 'M935 340L960 300 990 292 1040 325 1050 350 1090 370 1140 365', 'M1000 150L1030 230 1040 320 1015 390 1020 430 1060 480 1090 590 1140 640 1190 740 1215 790 1270 845 1300 920 1300 1000', 'M1225 100L1120 235 1080 265 1100 320 1050 350',
      'M1040 255L1080 265M1120 230H1155', 'M1335 170L1340 230 1365 290 1365 400 1385 440 1383 540', 'M1380 160L1410 240 1415 350 1412 430 1490 530 1530 600 1568 670', 'M1080 545L1180 540 1250 525 1310 520 1360 530 1400 600 1445 660 1470 740 1490 830 1568 960',
      'M950 540L960 580 1010 640 1080 710 1130 740 1200 810', 'M1150 800L1140 870 1130 930 1160 937 1200 970 1225 1000 1260 1060 1310 1150 1400 1240 1445 1310 1450 1350 1475 1355 1500 1400 1568 1500', 'M1285 1000L1310 1010 1340 1008 1368 950 1370 920 1440 875 1485 890 1568 892', 'M1155 0L1155 150', 'M1450 30L1568 12', 'M985 370L1100 365 1240 385', 'M1060 700L1190 745 1180 780 1110 760',
    ],
    minor: [
      'M880 60L940 90 980 220 1050 260', 'M760 100L870 60 960 80 1000 150', 'M780 190L830 230 900 300', 'M1200 110L1210 280 1140 250', 'M1210 240L1330 310 1410 315', 'M1400 220L1480 160 1568 220', 'M1415 310L1568 250', 'M1420 100L1540 120 1568 110', 'M1470 300L1480 440', 'M1568 300L1480 420', 'M1200 370L1270 460 1240 540', 'M1250 525L1200 620 1150 630',
      'M1100 600L1080 640 1130 720 1240 750', 'M950 550L945 640 985 700 1060 720', 'M990 620L1080 600 1200 600', 'M1230 440L1290 410 1370 425', 'M1400 490H1568', 'M1440 640L1490 700 1480 800 1540 830', 'M1080 790L1110 870 1150 920', 'M1360 960L1400 1020 1430 1100 1510 1220 1560 1380', 'M1300 920L1350 960 1230 960', 'M1180 930L1220 1000 1215 1080 1160 1130', 'M1020 430L1070 500 1120 560 1170 640', 'M840 370L900 370 935 410', 'M1030 60L1030 230M1060 90L1100 230M1155 70L1330 60', 'M1240 385L1320 400 1360 390', 'M1210 545L1215 430 1130 380', 'M1500 1380L1568 1390',
    ],
    dash: [],
  },
  {
    id: 'se', t: 'translate(900 1340) scale(.4974 .433)',
    forest: [
      'M390 240L450 200 560 210 620 330 640 400 660 470 690 570 800 620 850 680 860 740 900 790 970 850 980 1000 1000 1100 1060 1150 1080 1250 1060 1400 1010 1410 1000 1330 920 1300 880 1420 800 1360 800 1200 770 1100 680 1060 680 1000 760 990 740 850 690 800 690 720 620 610 500 615 420 560 400 430Z',
      'M300 0L390 0 400 80 330 110 220 110 220 80 290 60Z', 'M460 0L520 0 560 110 680 90 720 130 760 220 720 280 640 260 640 160 560 50Z', 'M620 20L690 20 720 80 700 120 640 60Z', 'M770 0L830 60 860 160 840 240 820 160 760 100Z', 'M830 250L920 200 1010 190 960 230 880 270 850 320 780 330 780 290Z',
      'M930 430L980 370 1010 450 1060 550 1100 640 1030 650 990 590 960 520Z', 'M1090 700L1200 680 1290 760 1400 790 1440 850 1420 890 1495 890 1516 1080 1516 1400 1480 1420 1410 1250 1240 1230 1190 1130 1110 1000 1090 820Z',
      'M1050 850L1080 870 1110 900 1110 1000 1150 1130 1080 1080 1060 980Z', 'M1190 615L1270 620 1255 680 1220 660Z', 'M1090 500L1170 460 1150 540 1110 540Z', 'M1100 135L1125 155 1095 190Z', 'M1400 110L1440 60 1516 0 1470 60 1420 130Z', 'M1240 20L1360 0 1330 50 1260 40Z', 'M1490 130L1516 110 1516 210Z',
      'M0 1160L100 1220 150 1320 220 1370 210 1440 150 1400 80 1290 0 1220Z', 'M120 1380L240 1420 260 1460 180 1440Z', 'M1110 1240L1170 1260 1150 1310 1110 1310Z', 'M1270 1230L1310 1290 1300 1380 1270 1350Z', 'M860 330L910 400 880 460 850 370Z', 'M620 740L670 725 680 750 630 790Z', 'M240 220L270 235 250 240Z', 'M280 480L300 520 290 540Z', 'M1000 640L1040 700 1080 760 1060 820 1000 710Z',
      'M60 1350L75 1365 55 1380Z', 'M50 790L70 830 55 840Z',
    ],
    park: ['M660 60L720 90 700 110 650 90Z', 'M940 440L990 500 1020 600 980 570 950 500Z', 'M800 1190L880 1190 850 1240 800 1220Z', 'M1090 700L1080 820 1060 800Z', 'M1390 900L1440 960 1380 930Z', 'M1060 860L1100 880 1090 930 1060 910Z', 'M1410 1300L1440 1400 1420 1400Z', 'M1110 500L1140 520 1120 540Z', 'M320 560L350 580 330 590Z'],
    urban: ['M380 980L450 960 470 1000 450 1060 410 1030Z', 'M150 730L180 720 195 745 160 750Z', 'M310 915L325 905 320 935Z', 'M20 620L45 625 35 655Z', 'M575 1305L600 1305 590 1325Z', 'M690 1370L710 1370 700 1400Z'],
    lake: [
      'M665 365L695 360 708 332 735 332 750 352 735 385 708 400 680 385Z', 'M803 0L838 0 833 38 818 35Z', 'M145 345L175 370 180 400 155 385Z', 'M200 470L225 480 210 535 195 510Z', 'M195 425L235 460 215 475Z', 'M55 265L82 270 60 300Z', 'M0 240L28 248 5 255Z', 'M245 540L270 590 250 590Z', 'M430 390L470 405 455 408Z', 'M385 360L390 380 383 378Z',
      'M800 575L812 550 822 585 806 590Z', 'M1110 1170L1122 1162 1132 1185 1118 1185Z', 'M1105 1215L1122 1200 1115 1215Z', 'M595 975L630 945 620 980Z', 'M475 960L490 960 482 970Z', 'M355 155L385 142 370 155Z', 'M275 100L298 103 285 105Z', 'M625 220L637 200 637 222Z', 'M720 1205L742 1210 730 1215Z', 'M738 1370L755 1378 745 1388Z', 'M505 725L525 742 515 738Z', 'M605 825L620 832 610 838Z', 'M390 830L403 820 398 840Z', 'M357 770L366 772 362 785Z', 'M630 775L658 765 640 775Z', 'M715 700L738 688 725 700Z', 'M30 440L45 448 35 452Z', 'M510 1340L520 1342 516 1350Z', 'M65 900L78 905 70 908Z', 'M722 835L732 838 728 855Z', 'M673 460L679 445 676 465Z',
    ],
    river: ['M165 360L215 285 240 265 310 260 345 230 355 190 400 155 450 135', 'M500 865L530 825 590 805 600 710 640 645 680 700 730 740 770 780 790 790 812 845', 'M0 720L50 750 85 820 140 840 160 890 190 950 205 1010', 'M260 1020L320 990 420 970 460 900', 'M235 1170L270 1280 330 1350 350 1400', 'M0 1370L45 1475', 'M165 360L120 430 60 490'],
    road: [
      'M678 395L690 460 730 510 750 560 850 605 875 670 910 695', 'M940 705L960 780 985 820 1000 890 997 970 1055 1090 1070 1150 1075 1250 1095 1350 1105 1400', 'M0 580L50 650 80 690 180 745 275 850 370 970 440 1050 500 1120 600 1240', 'M0 870L130 870 175 853 275 853', 'M0 870L60 960 135 1100 180 1155 260 1290 320 1385 400 1475',
      'M260 1288L400 1288 530 1240', 'M430 960L430 1190 420 1290 365 1400 365 1430', 'M445 970L490 970 460 985 455 1000', 'M460 1035L530 1038', 'M600 1240V1310M540 1315L675 1312 705 1393 605 1393M600 1315L605 1400', 'M205 388L245 375 270 350 315 297', 'M0 490L85 485 130 450 158 452', 'M0 1380L40 1440', 'M0 15L20 0',
    ],
    minor: [
      'M520 0L545 110', 'M600 180L640 240 655 330 678 395', 'M0 60L40 130 90 200 85 250 145 330 190 370 180 440 240 465 390 465 410 495 460 515 455 545 385 545 325 645', 'M40 120L120 150 160 100 240 70 300 30 310 0', 'M0 400H85L145 330', 'M0 740H235L300 690 350 640 480 665 480 735 455 770 430 890', 'M460 515L490 600 485 660',
      'M170 640L175 850', 'M180 440L240 500 320 560 370 640', 'M120 850L120 920 215 980 210 1350', 'M330 985V1110L315 1180 317 1380', 'M430 890H350L275 950M275 853V853', 'M240 1310L220 1350 180 1380 85 1320 0 1345', 'M240 1350L280 1400 340 1340', 'M530 1038L620 1040 700 1025 735 990 800 990 870 1005', 'M600 1150L700 1170 740 1220 800 1150 800 1100 700 1090',
      'M610 1150V1240M530 1170L680 1250M500 1340L540 1400M515 1335L520 1310', 'M820 30L870 88 920 72 1005 90 1040 160 1045 230 1100 270 1125 352 1200 360 1240 300 1285 293 1370 332 1465 325 1516 300', 'M1400 0L1375 100 1420 240 1405 330', 'M1370 332L1350 380 1362 540 1400 700 1475 800 1516 835', 'M1125 352L985 362 910 430 920 520 940 700', 'M1065 1120L1120 1150 1140 1210 1200 1255 1240 1230 1335 1240 1370 1150 1440 1090 1490 1130 1510 1195', 'M1140 1200L1080 1270',
      'M490 970L530 940 530 890 585 868', 'M700 1393L740 1370 790 1350', 'M80 640L180 745', 'M40 640L45 900', 'M450 470L400 460',
    ],
    dash: ['M525 5L900 400 1200 718 1510 1045'],
  },
]
const cities = [
  ['EUREKA', 212, 309, 847.5, 20.5, 317.5, 840], ['Redding', 549, 632.5, 898.500, 19.500, 639.500, 891], ['Chico', 678.500, 734.500, 1102.500, 19.500, 740.500, 1095.500],
  ['Yuba City', 680, 774.500, 1241.500, 19.500, 781, 1234], ['RENO', 1032, 1101.500, 1151, 20.500, 1109, 1142], ['Carson City', 998.500, 1111.500, 1236.500, 19.500, 1117, 1229],
  ['SACRAMENTO', 637.500, 795, 1373.500, 20.500, 802, 1364], ['Santa Rosa', 464, 574.500, 1405, 19.500, 581, 1398], ['SAN FRANCISCO', 428, 627.500, 1559.500, 22.500, 634.500, 1550],
  ['Oakland', 668, 751, 1552.500, 19.500, 661, 1545], ['Stockton', 743.500, 833, 1517, 19.500, 839.500, 1510], ['Modesto', 801.500, 888, 1591, 19.500, 894, 1582.500],
  ['SAN JOSÉ', 615, 724.500, 1662, 20.500, 731, 1652.500], ['Santa Cruz', 591, 699, 1743, 19.500, 705.500, 1735], ['Salinas', 697, 767, 1810.500, 19.500, 772, 1803],
  ['FRESNO', 1017, 1108, 1796, 20.500, 1114, 1788], ['Visalia', 1133, 1197.500, 1888, 19.500, 1203.500, 1881.500],
].map(([name, x1, x2, y, size, dx, dy]) => ({ name, x: x1, w: x2 - x1, y, size, dx, dy }))
const clusters = [
  [9, 326.5, 836.5], [5, 658.5, 962.5], [6, 908.5, 1122.5], [18, 746.5, 1170.5], [9, 506, 1242.5], [11, 584, 1400.5], [41, 808, 1374.5],
  [105, 672.5, 1558.5], [7, 836.5, 1522.5], [24, 766.5, 1796.5], [4, 1168, 1410.5], [25, 940.5, 1572.5], [2, 1000, 1772.5], [37, 1150, 1850.5],
].map(([n, x, y]) => ({ n, x, y, kind: n < 10 ? 'small' : n < 100 ? 'medium' : 'large' }))
const pins = [[539.5, 845.5], [1049, 1192], [1367.5, 1646]]
</script>

<template>
  <div class="app">
    <header class="topbar">
      <svg class="back" viewBox="0 0 20 32"><path d="M16 3.500L5 16L16 28.500" /></svg>
      <svg class="logo" viewBox="0 0 230 40">
        <text y="32" text-anchor="middle"><tspan x="17">V</tspan><tspan x="46.500">I</tspan><tspan x="75.500" class="z">Z</tspan><tspan x="113">P</tspan><tspan x="146">A</tspan><tspan x="179.500">T</tspan><tspan x="217">H</tspan></text>
      </svg>
      <h1>PROSPECTING ANALYSIS</h1>
      <nav class="nav">
        <a v-for="n in navItems" :key="n.label" :class="n.cls">
          <svg viewBox="0 0 24 24"><path :d="icons[n.icon]" /></svg><span>{{ n.label }}</span>
        </a>
        <svg class="bell" viewBox="0 0 24 24"><path :d="icons.bell" /></svg>
        <svg class="gear" viewBox="0 0 24 24"><path :d="icons.gear" /></svg>
      </nav>
    </header>

    <div class="main">
      <aside class="sidebar">
        <div v-for="s in sideItems" :key="s.icon" class="side-item">
          <svg viewBox="0 0 24 24" :width="s.size" :height="s.size"><path :d="icons[s.icon]" /></svg>
        </div>
        <svg class="expand" viewBox="0 0 42 40"><path d="M3 3L19 20L3 37M21 3L37 20L21 37" /></svg>
      </aside>

      <section class="board">
        <article class="panel wide">
          <div class="panel-head">
            <span class="grip"><i v-for="i in 12" :key="i" /></span><h2>CHART</h2>
            <span class="tool"><i class="min" /></span><span class="tool"><i class="max" /></span>
          </div>
          <div class="panel-body">
            <svg class="chart" viewBox="168 173 3016 506">
              <rect x="1568.500" y="191.500" width="83" height="27" class="legend-box" />
              <text x="1662" y="212.700" class="legend" textLength="99.500">COUNTY</text>
              <g class="grid">
                <line v-for="t in yTicks" :key="t.v" x1="262" x2="3168" :y1="t.y" :y2="t.y" />
                <line v-for="t in xTicks" :key="t.label" :x1="t.x" :x2="t.x" y1="237" y2="431" />
                <line :x1="X0" :x2="X0" y1="237" y2="410" />
              </g>
              <rect v-for="(b, i) in bars" :key="i" :x="b.x" :y="b.y" width="28" :height="b.h" class="bar" />
              <line x1="262" x2="3168" y1="410" y2="410" class="zero" />
              <text v-for="t in yTicks" :key="t.v" x="261" :y="t.y + 7.500" class="tick" text-anchor="end">{{ t.v }}</text>
              <text v-for="t in xTicks" :key="t.label" class="tick" text-anchor="end" :transform="`translate(${t.x + 24} ${433}) rotate(-50)`">{{ t.label }}</text>
            </svg>
            <i class="resize" />
          </div>
        </article>

        <article class="panel">
          <div class="panel-head">
            <span class="grip"><i v-for="i in 12" :key="i" /></span><h2>MAP</h2>
            <span class="tool"><i class="min" /></span><span class="tool"><i class="max" /></span>
          </div>
          <div class="panel-body">
            <svg class="map" viewBox="168 773 1486 1206">
              <defs>
                <filter id="rough" x="-5%" y="-5%" width="110%" height="110%">
                  <feTurbulence type="fractalNoise" baseFrequency=".045" numOctaves="3" seed="4" result="n" />
                  <feDisplacementMap in="SourceGraphic" in2="n" scale="26" xChannelSelector="R" yChannelSelector="G" />
                </filter>
                <filter id="wobble" x="-5%" y="-5%" width="110%" height="110%">
                  <feTurbulence type="fractalNoise" baseFrequency=".05" numOctaves="2" seed="9" result="n" />
                  <feDisplacementMap in="SourceGraphic" in2="n" scale="9" xChannelSelector="R" yChannelSelector="G" />
                </filter>
                <filter id="soft" x="-50%" y="-50%" width="200%" height="200%"><feGaussianBlur stdDeviation="4.500" /></filter>
                <linearGradient id="pin" x1="0" y1="0" x2="0" y2="1"><stop offset="0" stop-color="#5d9dcf" /><stop offset="1" stop-color="#346dbf" /></linearGradient>
              </defs>
              <rect x="168" y="773" width="1486" height="1206" fill="#d7e7ea" />
              <path v-for="c in coasts" :key="c.t" :transform="c.t" :d="c.d" class="coast" />
              <path v-for="c in coasts" :key="c.t" :transform="c.t" :d="c.d + c.rest" class="land" />
              <g v-for="t in tiles" :key="t.id" :transform="t.t">
                <g filter="url(#rough)">
                  <path v-for="(d, i) in t.forest" :key="i" :d="d" class="forest" />
                  <path v-for="(d, i) in t.park" :key="i" :d="d" class="park" />
                </g>
                <path v-for="(d, i) in t.urban" :key="i" :d="d" class="urban" />
                <g filter="url(#wobble)">
                  <path v-for="(d, i) in t.river" :key="i" :d="d" class="river" />
                  <path v-for="(d, i) in t.lake" :key="i" :d="d" class="lake" />
                  <path v-for="(d, i) in t.minor" :key="i" :d="d" class="minor" />
                  <path v-for="(d, i) in t.road" :key="i" :d="d" class="road" />
                </g>
                <path v-for="(d, i) in t.dash" :key="i" :d="d" class="state" />
              </g>
              <path class="tile-edge" d="M392.500 773V1340M904.500 773V1979M1416.500 773V1979M320 796.500H1654M420 1308.500H1654M720 1820.500H1654" />
              <g class="city">
                <template v-for="c in cities" :key="c.name">
                  <text :x="c.x" :y="c.y" :font-size="c.size" :textLength="c.w" lengthAdjust="spacingAndGlyphs">{{ c.name }}</text>
                  <rect :x="c.dx - 3" :y="c.dy - 3" width="6" height="6" />
                </template>
                <text x="1592" y="1153.500" font-size="25" class="region" textLength="103" lengthAdjust="spacingAndGlyphs">NEVADA</text>
                <text x="1220" y="1806.500" font-size="25" class="region" textLength="162.500" lengthAdjust="spacingAndGlyphs">CALIFORNIA</text>
              </g>
              <g v-for="(p, i) in pins" :key="i" :transform="`translate(${p[0]} ${p[1]})`">
                <path d="M0 0L14 -36Q30 -48 40 -36Q42 -20 20 -8Z" fill="#000" opacity=".34" filter="url(#soft)" />
                <path d="M0 -1C-5 -18 -24 -38 -24 -55.500A24 24 0 0 1 24 -55.500C24 -38 5 -18 0 -1Z" fill="url(#pin)" stroke="#2f6da6" stroke-width="2" />
                <circle cy="-55" r="9.500" fill="#fff" stroke="#3673ad" stroke-width="2" />
              </g>
              <g v-for="(c, i) in clusters" :key="i" :class="['cluster', c.kind]">
                <circle :cx="c.x" :cy="c.y" r="40" class="outer" />
                <circle :cx="c.x" :cy="c.y" r="30" class="inner" />
                <text :x="c.x" :y="c.y + 8.500" text-anchor="middle">{{ c.n }}</text>
              </g>
            </svg>
            <div class="zoom">
              <span><svg viewBox="0 0 24 24"><path d="M0 12H24M12 0V24" /></svg></span>
              <span><svg viewBox="0 0 24 24"><path d="M0 12H24" /></svg></span>
            </div>
            <div class="credit"><a>Leaflet</a> | © <a>OpenStreetMap</a> contributors © <a>CARTO</a></div>
            <i class="resize raised" />
          </div>
        </article>

        <article class="panel">
          <div class="panel-head">
            <span class="grip"><i v-for="i in 12" :key="i" /></span><h2>NETWORK</h2>
            <span class="tool"><i class="min" /></span><span class="tool"><i class="max" /></span>
          </div>
          <div class="panel-body">
            <svg class="network" viewBox="1698 773 1486 1206">
              <g class="links">
                <line v-for="(l, i) in links" :key="i" :x1="l.h.x" :y1="l.h.y" :x2="l.n.x" :y2="l.n.y" :stroke-width="l.w === 1 ? 1.500 : l.w" :stroke-opacity="l.w === 1 ? 0.65 : l.w < 3 ? 0.85 : 1" />
              </g>
              <circle v-for="(n, i) in nodes" :key="i" :cx="n.x" :cy="n.y" r="4.200" class="node" />
              <circle v-for="h in hubs" :key="h.label" :cx="h.x" :cy="h.y" r="4.200" class="hub" />
              <text v-for="(n, i) in nodes" :key="i" :x="n.x" :y="n.y + 12.800">{{ n.label }}</text>
              <text v-for="h in hubs" :key="h.label" :x="h.x" :y="h.y + 12.800">{{ h.label }}</text>
            </svg>
            <i class="resize" />
          </div>
        </article>
      </section>
    </div>
  </div>
</template>

<style>
html,
body {
  margin: 0;
  background: #f7f7f7;
}
</style>

<style scoped>
.app {
  width: 3223px;
  height: 2019px;
  display: flex;
  flex-direction: column;
  overflow: hidden;
  background: #f7f7f7;
  font-family: Lato, sans-serif;
}
svg {
  display: block;
}
.topbar {
  box-sizing: border-box;
  height: 79px;
  flex: none;
  display: flex;
  align-items: center;
  background: #fff;
  border-bottom: 2px solid #e7e7e7;
  padding: 0 49px 4px 34px;
}
.back {
  width: 20px;
  height: 32px;
  fill: none;
  stroke: #444;
  stroke-width: 5;
}
.logo {
  width: 230px;
  height: 40px;
  margin-left: 29px;
  overflow: visible;
}
.logo text {
  font: 100 37px Lato, sans-serif;
  fill: #777;
  stroke: #777;
  stroke-width: 0.7;
}
.logo .z {
  fill: #4fb0ff;
  stroke: #4fb0ff;
}
h1 {
  margin: 0 0 0 57px;
  padding-top: 1px;
  font-size: 32px;
  font-weight: 400;
  letter-spacing: 0.27px;
  color: #4a4a4a;
  white-space: nowrap;
}
.nav {
  margin-left: auto;
  display: flex;
  align-items: center;
  color: #bdbdbd;
  fill: currentColor;
}
.nav a {
  display: flex;
  align-items: center;
  font-size: 27.5px;
  font-weight: 400;
  letter-spacing: -0.5px;
  white-space: nowrap;
}
.nav-overview {
  width: 242px;
}
.nav-overview svg {
  width: 37px;
  height: 37px;
  margin-right: 13px;
}
.nav-overview svg path {
  stroke: #bdbdbd;
  stroke-width: 0.6;
}
.nav-data {
  width: 172px;
}
.nav-data svg {
  width: 31px;
  height: 31px;
  margin-right: 18px;
}
.nav-projects {
  width: 253px;
}
.nav-projects svg {
  width: 40px;
  height: 40px;
  margin-right: 12px;
}
.bell {
  width: 36px;
  height: 36px;
  color: #444;
  fill: #444;
}
.gear {
  width: 33px;
  height: 33px;
  margin-left: 66px;
  margin-right: -3px;
  fill: #444;
}
.main {
  flex: 1;
  display: flex;
  min-height: 0;
}
.sidebar {
  width: 109px;
  flex: none;
  display: flex;
  flex-direction: column;
  background: #383838;
  fill: #dcdcdc;
}
.side-item {
  box-sizing: border-box;
  height: 120px;
  border-top: 2px solid #505050;
  border-bottom: 2px solid #2a2a2a;
  padding-right: 11px;
  display: flex;
  align-items: center;
  justify-content: center;
}
.side-item:first-child {
  height: 112px;
  border-top: 0;
  padding-bottom: 7px;
}
.side-item svg {
  filter: drop-shadow(0 2px 1px rgba(0, 0, 0, 0.5));
}
.expand {
  width: 42px;
  height: 40px;
  margin: auto 0 33px 31px;
  fill: none;
  stroke: #949494;
  stroke-width: 4.6;
}
.board {
  flex: 1;
  display: grid;
  grid-template-columns: 1490px 1490px;
  grid-template-rows: 560px 1260px;
  gap: 40px;
  padding: 42px 37px 38px 57px;
}
.panel {
  box-sizing: border-box;
  border: 2px solid #e2e2e2;
  background: #fff;
  display: flex;
  flex-direction: column;
  min-width: 0;
}
.wide {
  grid-column: 1 / 3;
}
.panel-head {
  height: 50px;
  flex: none;
  display: flex;
  background: #383838;
  padding: 0 6px 0 17px;
}
.grip {
  width: 14px;
  height: 20px;
  margin-top: 14px;
  display: grid;
  grid-template-columns: repeat(3, 3px);
  grid-template-rows: repeat(4, 3px);
  gap: 2.7px 2.5px;
}
.grip i {
  background: #e4e4e4;
}
h2 {
  margin: 10px auto 0 23.5px;
  font-size: 24px;
  line-height: 34px;
  font-weight: 400;
  letter-spacing: -0.3px;
  color: #f4f4f4;
}
.tool {
  width: 54px;
  height: 40px;
  margin: 3px 0 0 16px;
  background: #363636;
  display: flex;
  align-items: center;
  justify-content: center;
}
.min {
  width: 16px;
  height: 4px;
  background: #f2f2f2;
}
.max {
  box-sizing: border-box;
  width: 16px;
  height: 16px;
  border: 2px solid #f2f2f2;
  border-top-width: 4px;
}
.panel-body {
  flex: 1;
  position: relative;
  min-height: 0;
  overflow: hidden;
}
.panel-body > svg {
  width: 100%;
  height: 100%;
}
.resize {
  position: absolute;
  right: 30px;
  bottom: 30px;
  width: 14px;
  height: 14px;
  border-right: 6px solid #555;
  border-bottom: 6px solid #555;
}
.resize.raised {
  bottom: 80px;
}
.chart text {
  font-family: 'Liberation Sans', Arial, sans-serif;
  font-size: 24px;
  fill: #666;
}
.chart .legend {
  fill: #b4d6e2;
}
.legend-box {
  fill: #b4d6e2;
  stroke: #e3e5e6;
  stroke-width: 3;
}
.grid line {
  stroke: rgba(0, 0, 0, 0.11);
  stroke-width: 2;
}
.bar {
  fill: #b4d6e2;
}
.zero {
  stroke: #aaa;
  stroke-width: 2;
}
.land {
  fill: #faf9f4;
}
.coast {
  fill: none;
  stroke: #bfd6dd;
  stroke-width: 4;
  vector-effect: non-scaling-stroke;
}
.forest {
  fill: #eff3e9;
}
.park {
  fill: #e6eedc;
}
.urban {
  fill: #f5efe8;
}
.lake {
  fill: #d5e5ea;
  stroke: #c6dce3;
  stroke-width: 1;
  vector-effect: non-scaling-stroke;
}
.river,
.minor,
.road,
.state,
.tile-edge {
  fill: none;
  vector-effect: non-scaling-stroke;
}
.river {
  stroke: #dfecee;
  stroke-width: 1.8;
}
.minor {
  stroke: #fcecd0;
  stroke-width: 1.8;
}
.road {
  stroke: #fadea4;
  stroke-width: 2.2;
}
.state {
  stroke: #e0c8cc;
  stroke-width: 2;
  stroke-dasharray: 5 3.5;
}
.tile-edge {
  stroke: rgba(0, 0, 0, 0.035);
  stroke-width: 1;
}
.city {
  fill: #435d82;
}
.city text {
  font-family: Inter, sans-serif;
  font-weight: 600;
  paint-order: stroke;
  stroke: rgba(250, 250, 252, 0.85);
  stroke-width: 4;
}
.city .region {
  fill: #808b9e;
}
.cluster text {
  font: 24px 'Liberation Sans', Arial, sans-serif;
  fill: #414b50;
}
.small .outer {
  fill: rgba(181, 226, 140, 0.6);
}
.small .inner {
  fill: rgba(130, 201, 76, 0.6);
}
.medium .outer {
  fill: rgba(233, 208, 100, 0.65);
}
.medium .inner {
  fill: rgba(232, 197, 66, 0.6);
}
.large .outer {
  fill: rgba(243, 150, 115, 0.6);
}
.large .inner {
  fill: rgba(229, 135, 55, 0.65);
}
.zoom {
  position: absolute;
  left: 21px;
  top: -33px;
  width: 60px;
  border: 4px solid #b1b8b9;
  border-radius: 8px;
  background: #fff;
}
.zoom span {
  display: flex;
  height: 61px;
  align-items: center;
  justify-content: center;
}
.zoom span + span {
  border-top: 2px solid #ccc;
}
.zoom svg {
  width: 24px;
  height: 24px;
  fill: none;
  stroke: #000;
  stroke-width: 5;
}
.credit {
  position: absolute;
  right: 0;
  bottom: 0;
  padding: 0 10px;
  font: 22px/32px 'Liberation Sans', Arial, sans-serif;
  letter-spacing: 0.1px;
  color: #333;
  background: rgba(255, 255, 255, 0.75);
}
.credit a {
  color: #2a7aaa;
}
.links {
  stroke: #ccc;
}
.node {
  fill: #3a76b2;
}
.hub {
  fill: #b0c6e8;
}
.network text {
  font: 6.5px 'Liberation Sans', Arial, sans-serif;
  fill: #111;
  text-anchor: middle;
}
</style>
